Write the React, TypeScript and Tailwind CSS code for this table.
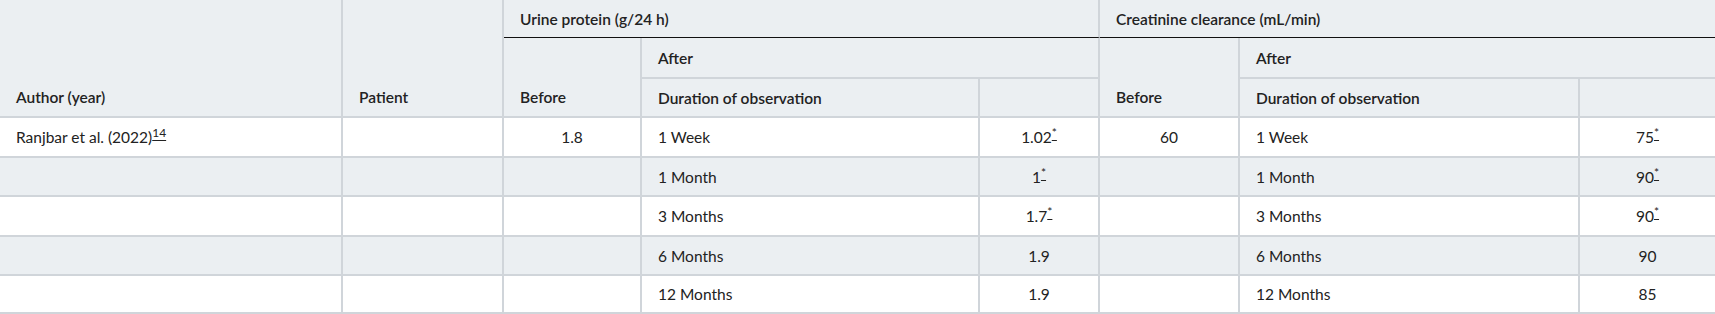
import React from "react";

type Row = {
    author?: boolean;
    before1?: string;
    dur1: string;
    val1: string;
    star1?: boolean;
    before2?: string;
    dur2: string;
    val2: string;
    star2?: boolean;
    h: string;
    bg: string;
};

const rows: Row[] = [
    { author: true, before1: "1.8", dur1: "1 Week", val1: "1.02", star1: true, before2: "60", dur2: "1 Week", val2: "75", star2: true, h: "h-[40px]", bg: "bg-white" },
    { dur1: "1 Month", val1: "1", star1: true, dur2: "1 Month", val2: "90", star2: true, h: "h-[39px]", bg: "bg-[#ebeff2]" },
    { dur1: "3 Months", val1: "1.7", star1: true, dur2: "3 Months", val2: "90", star2: true, h: "h-[40px]", bg: "bg-white" },
    { dur1: "6 Months", val1: "1.9", dur2: "6 Months", val2: "90", h: "h-[39px]", bg: "bg-[#ebeff2]" },
    { dur1: "12 Months", val1: "1.9", dur2: "12 Months", val2: "85", h: "h-[38px]", bg: "bg-white" },
];

const widths = [343, 161, 138, 338, 120, 140, 340, 135];

const Star: React.FC = () => (
    <sup className="text-[12px] underline decoration-[#222] underline-offset-[3px]">*</sup>
);

const cell = "border-r-2 border-b-2 border-[#d0d5da] px-4 align-middle";
const cellLast = "border-b-2 border-[#d0d5da] px-4 align-middle";

const App: React.FC = () => {
    return (
        <div className="w-[1715px] bg-white">
            <table className="w-[1715px] table-fixed border-separate border-spacing-0 font-['Lato','Noto_Sans',sans-serif] text-[15.5px] leading-5 text-[#222]">
                <colgroup>
                    {widths.map((w, i) => (
                        <col key={i} style={{ width: w }} />
                    ))}
                </colgroup>
                <thead className="bg-[#ebeff2] text-left font-semibold">
                    <tr className="h-[38px]">
                        <th rowSpan={3} className="border-r-2 border-b-2 border-[#d0d5da] px-4 pb-[9px] align-bottom font-semibold">Author (year)</th>
                        <th rowSpan={3} className="border-r-2 border-b-2 border-[#d0d5da] px-4 pb-[9px] align-bottom font-semibold">Patient</th>
                        <th colSpan={3} className="border-r-2 border-r-[#d0d5da] border-b border-b-[#111] px-4 align-middle font-semibold">Urine protein (g/24 h)</th>
                        <th colSpan={3} className="border-b border-b-[#111] px-4 align-middle font-semibold">Creatinine clearance (mL/min)</th>
                    </tr>
                    <tr className="h-[41px]">
                        <th rowSpan={2} className="border-r-2 border-b-2 border-[#d0d5da] px-4 pb-[9px] align-bottom font-semibold">Before</th>
                        <th colSpan={2} className={`${cell} font-semibold`}>After</th>
                        <th rowSpan={2} className="border-r-2 border-b-2 border-[#d0d5da] px-4 pb-[9px] align-bottom font-semibold">Before</th>
                        <th colSpan={2} className={`${cellLast} font-semibold`}>After</th>
                    </tr>
                    <tr className="h-[39px]">
                        <th className={`${cell} font-semibold`}>Duration of observation</th>
                        <th className={cell}></th>
                        <th className={`${cell} font-semibold`}>Duration of observation</th>
                        <th className={cellLast}></th>
                    </tr>
                </thead>
                <tbody>
                    {rows.map((r, i) => (
                        <tr key={i} className={`${r.h} ${r.bg}`}>
                            <td className={cell}>
                                {r.author && (
                                    <span>
                                        Ranjbar et al. (2022)
                                        <sup className="text-[12px] underline decoration-[#222] underline-offset-[3px]">14</sup>
                                    </span>
                                )}
                            </td>
                            <td className={cell}></td>
                            <td className={`${cell} text-center`}>{r.before1}</td>
                            <td className={cell}>{r.dur1}</td>
                            <td className={`${cell} text-center`}>
                                {r.val1}
                                {r.star1 && <Star />}
                            </td>
                            <td className={`${cell} text-center`}>{r.before2}</td>
                            <td className={cell}>{r.dur2}</td>
                            <td className={`${cellLast} text-center`}>
                                {r.val2}
                                {r.star2 && <Star />}
                            </td>
                        </tr>
                    ))}
                </tbody>
            </table>
        </div>
    );
};

export default App;
